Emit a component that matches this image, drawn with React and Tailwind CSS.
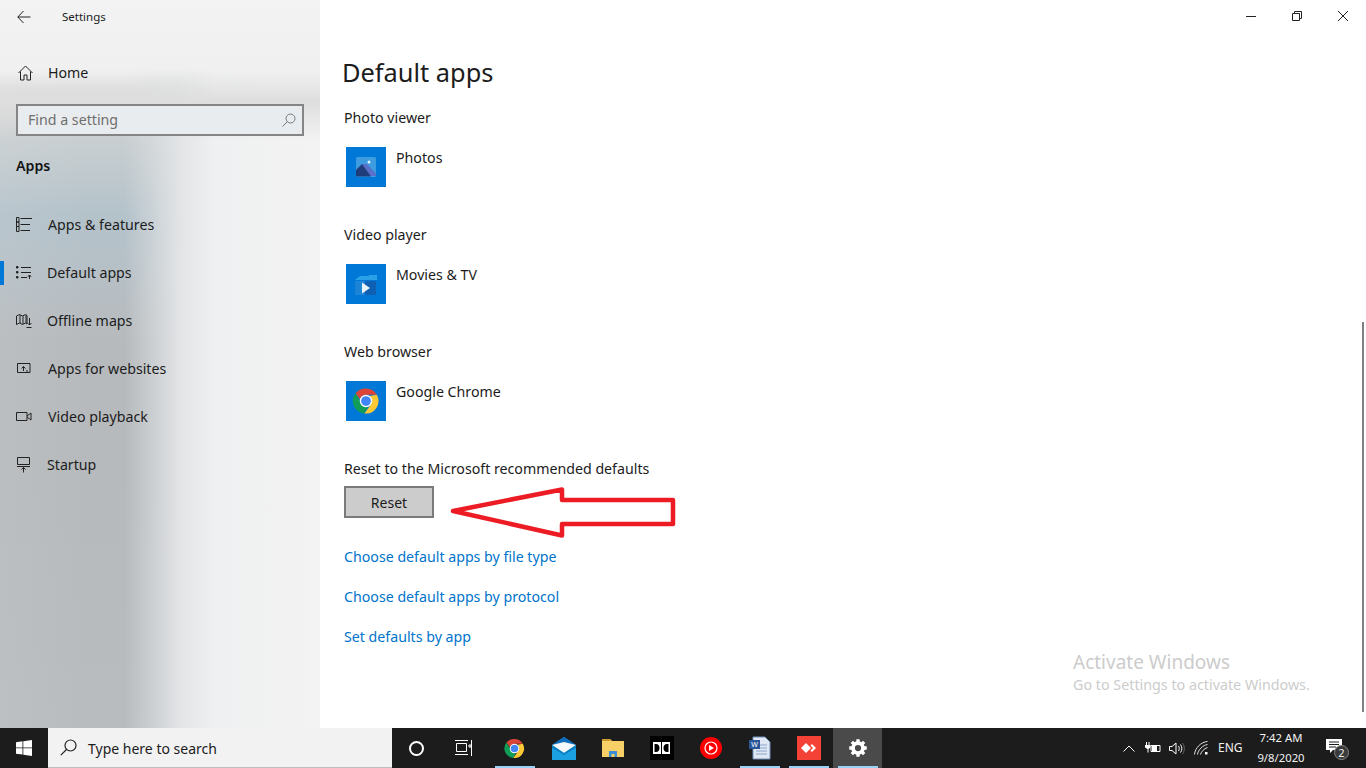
import React from "react";

const F = "[font-family:'Noto_Sans',sans-serif]";

function Nav({ icon, label, active, ml }) {
  return (
    <div className="relative flex items-center h-12 pl-4">
      {active && <div className="absolute left-0 top-[12px] w-1 h-6 bg-[#0078d7]" />}
      <div className="w-4 h-4 flex items-center justify-center shrink-0">{icon}</div>
      <span className={`text-[14.2px] text-[#1c1c1c] ${ml}`}>{label}</span>
    </div>
  );
}

const S = { fill: "none", stroke: "#222", strokeWidth: 1 };

const icons = {
  features: (
    <svg width="16" height="16" viewBox="0 0 16 16" {...S}>
      <path d="M.5 .5h2.500v4.500h-2.500zM.5 5h2.500v4.500h-2.500zM.5 9.500h2.500v5h-2.500zM4.500 1.500h11.500M4.500 7.500h9.500M4.500 13.500h9.500" />
    </svg>
  ),
  def: (
    <svg width="16" height="16" viewBox="0 0 16 16" {...S}>
      <path d="M.5 1.500h1.500v1.500h-1.500zM.5 6.500h1.500v1.500h-1.500zM.5 11.500h1.500v1.500h-1.500zM5 2.500h10M5 7.500h10M5 12.500h6M13.500 14v-4M12 11.500l1.500-1.500 1.500 1.500" fill="#222" />
    </svg>
  ),
  maps: (
    <svg width="16" height="16" viewBox="0 0 16 16" {...S}>
      <path d="M.5 3l3-1.500 3 1.500 3-1.500 1.500 1v8.500l-1.500-1-3 1.500-3-1.500-3 1.500zM4 2v8M7 3v8M10 2v8M13.500 5v7M11.500 10l2 2 2-2M10.500 14.500h5" />
    </svg>
  ),
  web: (
    <svg width="16" height="16" viewBox="0 0 16 16" {...S}>
      <path d="M1.500 2.500h12.500v9H1.500zM7.500 10V5.500M5.500 7.500l2-2 2 2M10 10h2" />
    </svg>
  ),
  video: (
    <svg width="16" height="16" viewBox="0 0 16 16" {...S}>
      <path d="M.5 3.500h10.500v8H.5zM11 7l4-3v7l-4-3" />
    </svg>
  ),
  startup: (
    <svg width="16" height="16" viewBox="0 0 16 16" {...S}>
      <path d="M1.500 .5h12v7h-12zM1 9.500h13M7.500 15.500v-5M5.500 12.500l2-2 2 2" />
    </svg>
  ),
};

function AppRow({ label, name, icon, pb }) {
  return (
    <div className={pb}>
      <div className="text-[14.2px] leading-5 text-[#1c1c1c] pl-[2px]">{label}</div>
      <div className="flex pl-1 mt-[19px]">
        <div className="w-10 h-10 bg-[#0078d7] flex items-center justify-center shrink-0">{icon}</div>
        <div className="ml-[10px] mt-[1px] text-[14.2px] leading-5 text-[#1c1c1c]">{name}</div>
      </div>
    </div>
  );
}

function ChromeIcon({ size = 30 }) {
  return (
    <svg width={size} height={size} viewBox="0 0 48 48">
      <path d="M24 4a20 20 0 0 1 17.300 10H24a10 10 0 0 0-9.600 7.200L7.200 11.500A20 20 0 0 1 24 4z" fill="#db4437" />
      <path d="M7.200 11.500l8.700 15A10 10 0 0 0 27 33.600L21.500 43.800A20 20 0 0 1 7.200 11.500z" fill="#0f9d58" />
      <path d="M41.300 14A20 20 0 0 1 21.500 43.800L30.500 31.500A10 10 0 0 0 30 16z" fill="#fcc934" />
      <circle cx="24" cy="24" r="10" fill="#fff" />
      <circle cx="24" cy="24" r="7.800" fill="#4285f4" />
    </svg>
  );
}

function Pin({ children, line, active }) {
  return (
    <div className={`relative h-10 w-[49px] flex items-center justify-center ${active ? "bg-[#4a4a4a]" : ""}`}>
      {children}
      {line && <div className="absolute bottom-0 left-[5px] right-[4px] h-[2px] bg-[#99d1f7]" />}
    </div>
  );
}

export default function App() {
  return (
    <div className={`w-[1366px] h-[768px] overflow-hidden flex flex-col bg-white ${F}`}>
      <div className="flex h-[728px]">
        {/* Sidebar */}
        <aside className="relative w-[320px] shrink-0 overflow-hidden bg-[#f1f2f2]">
          <div className="absolute inset-0 bg-[linear-gradient(to_bottom,#f3f3f3_0px,#efefef_70px,#d2d3d3_105px,#c6cdd0_150px,#b4c2ca_215px,#b6c0c6_270px,#b7babd_340px,#b7babc_480px,#b8bcbf_728px)]" />
          <div className="absolute inset-0 bg-[linear-gradient(to_right,rgba(255,255,255,0.06)_0px,transparent_90px,rgba(220,223,225,0)_125px,rgba(220,223,225,0.5)_150px,#e2e4e6_180px,#eff0f1_215px,#f3f3f3_320px)]" />
          <div className="absolute inset-x-0 top-0 h-[90px] bg-[linear-gradient(to_bottom,#f3f3f3,#f0f0f0_75%,transparent)]" />
          <div className="absolute inset-x-0 top-[70px] h-[70px] bg-[linear-gradient(to_bottom,transparent,#dedede_45%,transparent)]" />
          <div className="relative">
            <div className="flex items-center h-8 pt-[1px]">
              <svg className="ml-[17px]" width="14" height="14" viewBox="0 0 14 14" fill="none" stroke="#222" strokeWidth="1">
                <path d="M13.500 7H.8M6.500 1L.8 7l5.700 6" />
              </svg>
              <span className="ml-[31px] text-[11.5px] text-[#1c1c1c]">Settings</span>
            </div>
            <div className="flex items-center h-12 mt-[17px] pl-[18px]">
              <svg width="15" height="16" viewBox="0 0 15 16" fill="none" stroke="#222" strokeWidth="1">
                <path d="M.5 8L7.500 1l7 7M2.500 6.500v8.500h3.500v-5h3v5h3.500V6.500" />
              </svg>
              <span className="ml-[15px] text-[14.2px] text-[#1c1c1c]">Home</span>
            </div>
            <div className="mx-4 mt-[7px] h-8 border-2 border-[#858585] bg-[#e9ecee] flex items-center justify-between pl-[10px] pr-[6px]">
              <span className="text-[14.2px] text-[#6e6e6e]">Find a setting</span>
              <svg width="14" height="14" viewBox="0 0 14 14" fill="none" stroke="#777" strokeWidth="1">
                <circle cx="8.500" cy="5.500" r="4.500" />
                <path d="M5.300 8.700L.5 13.500" />
              </svg>
            </div>
            <div className="ml-4 mt-[20px] h-5 leading-5 text-[14.2px] font-semibold text-[#141414]">Apps</div>
            <div className="mt-[25px]">
              <Nav icon={icons.features} label="Apps & features" ml="ml-[16px]" />
              <Nav icon={icons.def} label="Default apps" active ml="ml-[15px]" />
              <Nav icon={icons.maps} label="Offline maps" ml="ml-[15px]" />
              <Nav icon={icons.web} label="Apps for websites" ml="ml-[16px]" />
              <Nav icon={icons.video} label="Video playback" ml="ml-[16px]" />
              <Nav icon={icons.startup} label="Startup" ml="ml-[15px]" />
            </div>
          </div>
        </aside>

        {/* Main */}
        <main className="relative flex-1 pl-[22px]">
          <div className="absolute right-0 top-0 flex items-center h-8">
            <div className="w-[46px] h-8 flex items-center justify-center">
              <div className="w-[10px] h-px bg-[#222]" />
            </div>
            <div className="w-[46px] h-8 flex items-center justify-center">
              <svg width="10" height="10" viewBox="0 0 10 10" fill="none" stroke="#222" strokeWidth="1">
                <path d="M.5 2.500h7v7h-7zM2.500 2.500V.5h7v7h-2" />
              </svg>
            </div>
            <div className="w-[46px] h-8 flex items-center justify-center">
              <svg width="10" height="10" viewBox="0 0 10 10" fill="none" stroke="#222" strokeWidth="1">
                <path d="M0 0l10 10M10 0L0 10" />
              </svg>
            </div>
          </div>
          <div className="absolute right-[2px] top-[322px] w-[2px] h-[390px] bg-[#808080]" />

          <h1 className="pt-[53px] text-[25.4px] leading-[38px] text-[#1c1c1c] font-normal">Default apps</h1>
          <div className="mt-[17px]">
            <AppRow
              label="Photo viewer"
              name="Photos"
              pb="pb-[38px]"
              icon={
                <svg width="24" height="24" viewBox="0 0 24 24">
                  <rect x="2" y="2" width="20" height="20" rx="1.500" fill="#3d9be0" />
                  <path d="M13 9l9 10v2H2v-5l7-7z" fill="#5a6fc9" />
                  <path d="M2 15l6-6 9 12.500H2z" fill="#1f3d7a" />
                  <circle cx="15" cy="7" r="1.500" fill="#e6f4ff" />
                </svg>
              }
            />
            <AppRow
              label="Video player"
              name="Movies & TV"
              pb="pb-[38px]"
              icon={
                <svg width="28" height="28" viewBox="0 0 28 28">
                  <path d="M3 10l5-4h9v-1h8v5H10z" fill="#2aa0e6" />
                  <rect x="3" y="11" width="21" height="14" rx="1" fill="#0f5fb3" />
                  <rect x="3" y="11" width="10" height="14" fill="#1b84d6" />
                  <path d="M10 12.500l8 5.500-8 5.500z" fill="#e8f2fa" />
                </svg>
              }
            />
            <AppRow label="Web browser" name="Google Chrome" pb="pb-[38px]" icon={<ChromeIcon />} />
          </div>
          <div className="text-[14.2px] leading-5 text-[#1c1c1c] pl-[2px]">Reset to the Microsoft recommended defaults</div>
          <button className="ml-[2px] mt-[7px] block w-[90px] h-8 border-2 border-[#7a7a7a] bg-[#cccccc] text-[14px] text-[#1c1c1c]">Reset</button>
          <div className="pl-[2px] mt-[29px] flex flex-col gap-5 text-[14.2px] leading-5 text-[#0074cc]">
            <span>Choose default apps by file type</span>
            <span>Choose default apps by protocol</span>
            <span>Set defaults by app</span>
          </div>

          {/* annotation arrow */}
          <svg className="absolute left-[128px] top-[484px]" width="230" height="56" viewBox="0 0 230 56" fill="none" stroke="#ed1c24" strokeWidth="4.500" strokeLinejoin="round">
            <path d="M5 27L114 5.500v10.500h111v24H114v11.500z" />
          </svg>

          <div className="absolute left-[753px] top-[650px] text-[#cccccc]">
            <div className="text-[19px] leading-6">Activate Windows</div>
            <div className="text-[14.3px] leading-5 mt-[1px]">Go to Settings to activate Windows.</div>
          </div>
        </main>
      </div>

      {/* Taskbar */}
      <footer className="h-10 bg-[#1c1c1c] flex items-center text-white">
        <div className="w-12 h-10 flex items-center justify-center">
          <svg width="16" height="16" viewBox="0 0 16 16" fill="#fff">
            <path d="M0 2.200L6.500 1.300V7.500H0zM7.300 1.200L16 0v7.500H7.300zM0 8.300h6.500v6.300L0 13.800zM7.300 8.300H16V16l-8.700-1.200z" />
          </svg>
        </div>
        <div className="w-[344px] h-10 bg-[#f2f2f2] border-b border-[#bfbfbf] flex items-center pl-[12px] shrink-0">
          <svg width="17" height="17" viewBox="0 0 17 17" fill="none" stroke="#222" strokeWidth="1.200">
            <circle cx="10.500" cy="6.500" r="5.500" />
            <path d="M6.500 10.500L.8 16.200" />
          </svg>
          <span className="ml-[11px] pt-[1px] text-[14px] text-[#1c1c1c]">Type here to search</span>
        </div>
        <div className="w-12 h-10 flex items-center justify-center">
          <div className="w-[15px] h-[15px] rounded-full border-2 border-white" />
        </div>
        <div className="w-[50px] h-10 flex items-center justify-center pr-[3px]">
          <svg width="18" height="16" viewBox="0 0 18 16" fill="none" stroke="#fff" strokeWidth="1">
            <path d="M0 .5h13M0 14.500h13M1.500 3.500h10v8h-10zM16.500 0v16M14 5h2v2h-2z" />
          </svg>
        </div>
        <Pin line><ChromeIcon size={23} /></Pin>
        <Pin>
          <svg width="24" height="23" viewBox="0 0 24 23">
            <path d="M0 8L12 0l12 8v15H0z" fill="#1ba1e2" />
            <path d="M0 8L12 0l12 8z" fill="#0f6cbd" />
            <path d="M0 8l12 8 12-8-12-3z" fill="#f4f8fb" />
            <path d="M0 8l12 8 12-8v3L12 18 0 11z" fill="#0f7fc4" />
          </svg>
        </Pin>
        <Pin>
          <svg width="22" height="20" viewBox="0 0 22 20">
            <path d="M0 1h8l2 2h12v16H0z" fill="#f6cf66" />
            <path d="M0 1h8l2 2H0z" fill="#c99a2e" />
            <path d="M7 19v-6h8v6h-2.500v-3h-3v3z" fill="#3a8fd6" />
          </svg>
        </Pin>
        <Pin>
          <div className="w-6 h-6 bg-black flex items-center justify-center">
            <svg width="17" height="12" viewBox="0 0 17 12" fill="#fff" fillRule="evenodd">
              <path d="M0 0h8v12H0zM1.500 2v8h1.500c2.500 0 3.500-2 3.500-4s-1-4-3.500-4z" />
              <path d="M17 0H9v12h8zM15.500 2v8H14c-2.500 0-3.500-2-3.500-4s1-4 3.500-4z" />
            </svg>
          </div>
        </Pin>
        <Pin>
          <svg width="22" height="22" viewBox="0 0 22 22">
            <circle cx="11" cy="11" r="11" fill="#f00" />
            <circle cx="11" cy="11" r="6" fill="none" stroke="#fff" strokeWidth="1.200" />
            <path d="M9 8l5 3-5 3z" fill="#fff" />
          </svg>
        </Pin>
        <Pin line>
          <svg width="23" height="24" viewBox="0 0 23 24">
            <path d="M5 1h12l5 5v17H5z" fill="#dfe8f4" stroke="#6f8fb8" strokeWidth="1" />
            <path d="M8 9h11M8 12h11M8 15h11M8 18h11" stroke="#8aa4c8" strokeWidth="1" />
            <rect x="1" y="4" width="11" height="9" fill="#2b579a" />
            <text x="6.500" y="11" fontSize="7" fill="#fff" textAnchor="middle" fontFamily="Liberation Sans, sans-serif">W</text>
          </svg>
        </Pin>
        <Pin line>
          <div className="w-6 h-6 bg-[#f44336] flex items-center justify-center">
            <svg width="16" height="12" viewBox="0 0 16 12" fill="#fff">
              <path d="M5 1l5 5-5 5-5-5zM11 2l4 4-4 4-1.500-1.500L12 6 9.500 3.500z" />
            </svg>
          </div>
        </Pin>
        <Pin line active>
          <svg width="20" height="20" viewBox="0 0 24 24" fill="none" stroke="#fff">
            <circle cx="12" cy="12" r="6" strokeWidth="4.500" />
            <path strokeWidth="4" d="M12 1.500v4M12 18.500v4M1.500 12h4M18.500 12h4M4.600 4.600l2.800 2.800M16.600 16.600l2.800 2.800M19.400 4.600l-2.800 2.800M7.400 16.600l-2.800 2.800" />
          </svg>
        </Pin>
        <div className="flex-1" />
        <div className="flex items-center h-10 text-[#f2f2f2]">
          <svg width="12" height="7" viewBox="0 0 12 7" fill="none" stroke="#fff" strokeWidth="1">
            <path d="M.5 6.500L6 1l5.500 5.500" />
          </svg>
          <svg className="ml-[10px]" width="16" height="12" viewBox="0 0 16 12" fill="none" stroke="#fff" strokeWidth="1">
            <path d="M6 3.500h9v6H6z" />
            <rect x="7" y="4" width="5" height="5" fill="#fff" stroke="none" />
            <path d="M1.500 0v3M4 0v3" />
            <path d="M0 3h5.500v2.500L3.500 7v3.500H2.500V7L0 5.500z" fill="#fff" stroke="none" />
          </svg>
          <svg className="ml-[8px]" width="16" height="13" viewBox="0 0 16 13" fill="none" stroke="#fff" strokeWidth="1">
            <path d="M.5 4.500h2.500L7 1v11L3 8.500H.5zM9.500 4c1 1.500 1 3.500 0 5M11.500 2.500c1.800 2.500 1.800 5.500 0 8" />
            <path d="M13.500 1c2.500 3.500 2.500 7.500 0 11" stroke="#666" />
          </svg>
          <svg className="ml-[9px]" width="15" height="14" viewBox="0 0 15 14" fill="none" stroke="#ddd" strokeWidth="1">
            <path d="M.5 13.500C1 7 7 1 13.500 .5M3.500 13.500C4 9 9 4 13.500 3.500M6.500 13.500C7 11 10 7.500 13.500 6.500" />
            <rect x="11" y="11" width="2.500" height="2.500" fill="#fff" stroke="none" />
          </svg>
          <span className="ml-[9px] text-[12px] w-[24px]">ENG</span>
          <div className="ml-[12px] w-[54px] flex flex-col items-center text-[11.3px] leading-5">
            <span>7:42 AM</span>
            <span>9/8/2020</span>
          </div>
          <div className="relative ml-[18px] mr-[20px] w-[20px] h-10 flex items-center">
            <svg className="-mt-[4px]" width="16" height="15" viewBox="0 0 16 15" fill="#fff">
              <path d="M0 0h16v11H7l-3 3v-3H0z" />
              <path d="M3 3h10M3 5.500h10M3 8h7" stroke="#1c1c1c" strokeWidth="1" />
            </svg>
            <div className="absolute left-[8px] top-[17px] w-[15px] h-[15px] rounded-full bg-[#3a3a3a] border border-[#888] flex items-center justify-center text-[11px] leading-none">2</div>
          </div>
        </div>
      </footer>
    </div>
  );
}
